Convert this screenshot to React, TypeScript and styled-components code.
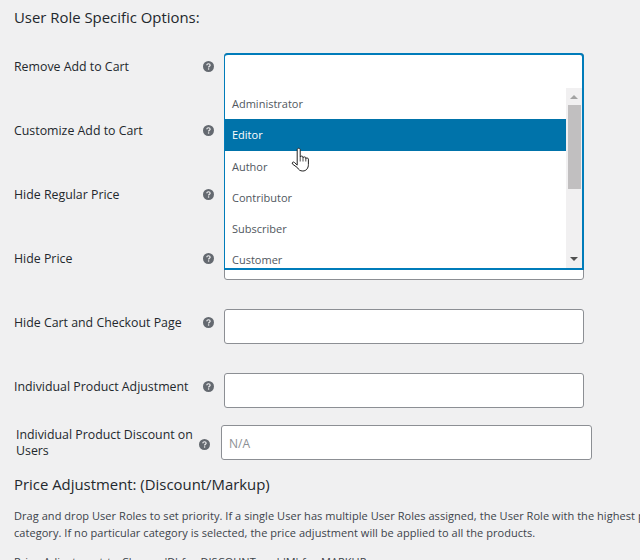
import React from 'react';
import styled, { createGlobalStyle } from 'styled-components';

const GlobalStyle = createGlobalStyle`
  html, body {
    margin: 0;
    height: 560px;
    overflow: hidden;
    background: #f0f0f1;
  }
  body {
    font-family: "Open Sans", "Noto Sans", sans-serif;
    color: #3c434a;
  }
`;

const Page = styled.div`
  width: 900px;
  height: 560px;
  overflow: hidden;
  box-sizing: border-box;
  padding: 8px 0 0 14px;
`;

const Title = styled.h3`
  margin: 0;
  font-size: 14.9px;
  line-height: 18px;
  font-weight: 500;
  color: #23282d;
`;

const Rows = styled.div`
  display: flex;
  flex-direction: column;
  margin-top: 27px;
`;

const Row = styled.div`
  display: grid;
  grid-template-columns: 186px 24px 360px;
  align-items: start;
  height: 35px;
  margin-bottom: 29px;
`;

const WideRow = styled.div`
  display: grid;
  grid-template-columns: 178px 27px 371px;
  align-items: center;
  height: 35px;
  margin: -12px 0 15px 2px;
`;

const Label = styled.label<{ $wide?: boolean }>`
  padding-top: ${(p) => (p.$wide ? 0 : 6)}px;
  font-size: 12.35px;
  line-height: 16px;
  font-weight: 500;
  color: #23282d;
`;

const Help = styled.svg`
  display: block;
  width: 11px;
  height: 11px;
`;

const HelpCell = styled.span<{ $wide?: boolean }>`
  display: flex;
  justify-content: center;
  padding-top: ${(p) => (p.$wide ? 3 : 8)}px;
  padding-right: ${(p) => (p.$wide ? 7 : 8)}px;
`;

const FieldBox = styled.div`
  position: relative;
  height: 35px;
  box-sizing: border-box;
  background: #fff;
  border: 1px solid #8c8f94;
  border-radius: 3px;
`;

const Placeholder = styled.span`
  display: block;
  padding-left: 7px;
  font-size: 12px;
  line-height: 35px;
  color: #8c8f94;
`;

const Dropdown = styled.div`
  position: absolute;
  z-index: 2;
  top: -1px;
  left: -1px;
  right: -1px;
  height: 217px;
  box-sizing: border-box;
  padding-top: 33px;
  background: #fff;
  border: 1px solid #007cba;
  border-width: 2px 2px 2px 1px;
  border-radius: 4px 4px 0 0;
  display: flex;
`;

const List = styled.ul`
  flex: 1;
  height: 180px;
  margin: 0;
  padding: 0;
  list-style: none;
  overflow: hidden;
`;

const Option = styled.li<{ $active?: boolean }>`
  height: 31.3px;
  padding-left: 7px;
  font-size: 11px;
  line-height: 31px;
  background: ${(p) => (p.$active ? '#0073aa' : 'transparent')};
  color: ${(p) => (p.$active ? '#fff' : '#50575e')};
`;

const Scrollbar = styled.div`
  display: flex;
  flex-direction: column;
  align-items: center;
  justify-content: space-between;
  width: 16px;
  height: 180px;
  background: #f1f0f1;
  padding: 7px 0 7px;
  box-sizing: border-box;
  position: relative;
`;

const Arrow = styled.span<{ $up?: boolean }>`
  width: 0;
  height: 0;
  border-left: 4px solid transparent;
  border-right: 4px solid transparent;
  ${(p) =>
    p.$up
      ? 'border-bottom: 4px solid #a3a3a3;'
      : 'border-top: 4px solid #505050;'}
`;

const Thumb = styled.div`
  position: absolute;
  top: 17px;
  left: 2px;
  right: 1px;
  height: 84px;
  background: #c1bfc0;
`;

const Cursor = styled.svg`
  position: absolute;
  z-index: 3;
  left: 291px;
  top: 147px;
  width: 20px;
  height: 26px;
`;

const Text = styled.p`
  margin: 0 0 12px;
  width: 850px;
  font-size: 11px;
  letter-spacing: 0.05px;
  line-height: 17px;
  color: #3c434a;
`;

const NoteText = styled(Text)`
  word-spacing: 1px;
`;

const SectionTitle = styled(Title)`
  margin-bottom: 14px;
`;

const roles = ['Administrator', 'Editor', 'Author', 'Contributor', 'Subscriber', 'Customer'];
const labels = [
  'Remove Add to Cart',
  'Customize Add to Cart',
  'Hide Regular Price',
  'Hide Price',
  'Hide Cart and Checkout Page',
  'Individual Product Adjustment',
];

const HelpIcon = () => (
  <Help viewBox="0 0 12 12">
    <circle cx="6" cy="6" r="6" fill="#646970" />
    <path d="M4.2 4.7c0-1.1.8-1.7 1.8-1.7s1.8.6 1.8 1.5c0 1.3-1.7 1.3-1.7 2.6" fill="none" stroke="#f0f0f1" strokeWidth="1.3" />
    <rect x="5.4" y="8" width="1.4" height="1.4" fill="#f0f0f1" />
  </Help>
);

export default function App() {
  return (
    <Page>
      <GlobalStyle />
      <Title>User Role Specific Options:</Title>
      <Rows>
        {labels.map((label, i) => (
          <Row key={label}>
            <Label>{label}</Label>
            <HelpCell>
              <HelpIcon />
            </HelpCell>
            <FieldBox>
              {i === 0 && (
                <Dropdown>
                  <List>
                    {roles.map((role) => (
                      <Option key={role} $active={role === 'Editor'}>
                        {role}
                      </Option>
                    ))}
                  </List>
                  <Scrollbar>
                    <Arrow $up />
                    <Thumb />
                    <Arrow />
                  </Scrollbar>
                </Dropdown>
              )}
            </FieldBox>
          </Row>
        ))}
        <WideRow>
          <Label $wide>Individual Product Discount on Users</Label>
          <HelpCell $wide>
            <HelpIcon />
          </HelpCell>
          <FieldBox>
            <Placeholder>N/A</Placeholder>
          </FieldBox>
        </WideRow>
      </Rows>
      <SectionTitle>Price Adjustment: (Discount/Markup)</SectionTitle>
      <Text>
        Drag and drop User Roles to set priority. If a single User has multiple User Roles assigned, the User Role with
        the highest priority will be applied to the selected
        <br />
        category. If no particular category is selected, the price adjustment will be applied to all the products.
      </Text>
      <NoteText>Price Adjustment to Change 'D' for DISCOUNT and 'M' for MARKUP</NoteText>
      <Cursor viewBox="0 0 20 26">
        <path
          d="M6.2 2.8c0-2 3-2 3 0V10c0-1.2 2.8-1.2 2.8 0v.8c0-1.2 2.8-1.2 2.8 0v1c0-1.1 2.6-1.1 2.6.3v5.4c0 3.5-2 6.5-5.6 6.5-2.8 0-4.2-1.2-5.4-3.4L1.4 17c-.8-1.5 1-2.7 2.1-1.5l2.7 2.6Z"
          fill="#fff"
          stroke="#222"
          strokeWidth="1"
          strokeLinejoin="round"
        />
        <path d="M9.2 10v4.5M12 10.8v3.7M14.8 11.8v2.7" fill="none" stroke="#222" strokeWidth="0.8" />
      </Cursor>
    </Page>
  );
}
